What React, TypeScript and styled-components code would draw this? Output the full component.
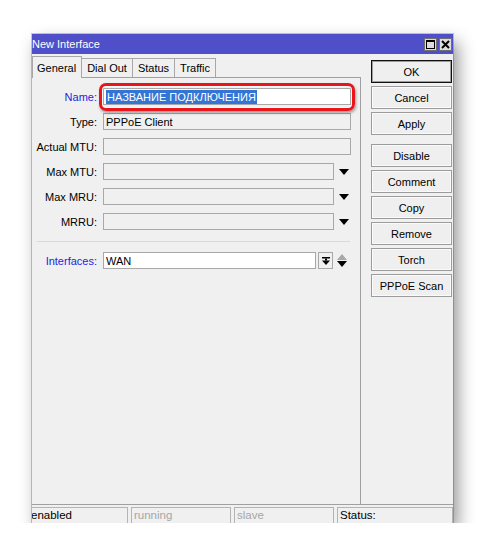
import React from "react"
import styled, { createGlobalStyle } from "styled-components"

const GlobalStyle = createGlobalStyle`
  html, body {
    margin: 0;
    padding: 0;
    background: #ffffff;
  }
  body {
    font-family: "Liberation Sans", Arial, sans-serif;
    font-size: 11px;
    color: #000;
  }
`

const Window = styled.div`
  margin: 34px 0 0 32px;
  width: 421px;
  height: 489px;
  background: #f0f0f0;
  display: flex;
  flex-direction: column;
  box-shadow: 0 0 0 1px rgba(0, 0, 0, 0.2), 5px 8px 16px rgba(0, 0, 0, 0.42);
`

const TitleBar = styled.div`
  height: 20px;
  background: #4f4fc9;
  color: #fff;
  display: flex;
  align-items: center;
  padding: 0 1px 0 0;
  font-size: 11px;
`

const Title = styled.div`
  flex: 1;
`

const TitleButton = styled.div`
  width: 13px;
  height: 13px;
  margin-left: 2px;
  background: #dcdcdc;
  border: 1px solid #707070;
  display: flex;
  align-items: center;
  justify-content: center;
  box-sizing: border-box;
`

const Body = styled.div`
  flex: 1;
  display: flex;
`

const LeftPane = styled.div`
  width: 329px;
  display: flex;
  flex-direction: column;
`

const Tabs = styled.div`
  display: flex;
  align-items: flex-end;
  height: 23px;
  box-sizing: border-box;
`

const Tab = styled.div<{ $active?: boolean }>`
  height: ${p => (p.$active ? 22 : 19)}px;
  padding: 0 ${p => (p.$active ? 4 : 5)}px 0 ${p => (p.$active ? 4 : 5)}px;
  margin-left: -1px;
  border: 1px solid #a8a8a8;
  border-bottom: none;
  background: #f0f0f0;
  display: flex;
  align-items: center;
  box-sizing: border-box;
  font-size: 11px;
  position: relative;
  top: ${p => (p.$active ? 1 : 0)}px;
  z-index: ${p => (p.$active ? 1 : 0)};

  &:first-child {
    margin-left: 0;
    padding-right: 5px;
  }
`

const Panel = styled.div`
  flex: 1;
  border-top: 1px solid #a0a0a0;
  border-right: 1px solid #a0a0a0;
  padding: 10px 0 0 3px;
  display: flex;
  flex-direction: column;
  gap: 8px;
`

const Row = styled.div`
  display: flex;
  align-items: center;
  height: 17px;
`

const Label = styled.div<{ $blue?: boolean }>`
  width: 62px;
  margin-right: 6px;
  text-align: right;
  color: ${p => (p.$blue ? "#2323e6" : "#000")};
  white-space: nowrap;
`

const Field = styled.div<{ $white?: boolean; $width: number }>`
  width: ${p => p.$width}px;
  height: 17px;
  box-sizing: border-box;
  border: 1px solid #a8a8a8;
  background: ${p => (p.$white ? "#fff" : "#f0f0f0")};
  display: flex;
  align-items: center;
  padding-left: 2px;
  white-space: nowrap;
  overflow: hidden;
`

const Highlighted = styled.span`
  background: #3275d6;
  color: #fff;
  padding: 1px 1px;
`

const Annotated = styled.div`
  position: relative;
`

const RedRing = styled.div`
  position: absolute;
  left: -4px;
  right: -4px;
  top: -5px;
  bottom: -6px;
  border: 3px solid #e8151b;
  border-radius: 7px;
  box-shadow: 1px 2px 3px rgba(0, 0, 0, 0.35), inset 0 0 0 1px rgba(255, 255, 255, 0.7);
  pointer-events: none;
`

const Arrow = styled.div`
  width: 19px;
  display: flex;
  justify-content: center;
  align-items: center;
`

const Separator = styled.div`
  height: 1px;
  background: #d9d9d9;
  margin: 3px 10px 2px 2px;
`

const SmallBox = styled.div`
  width: 15px;
  height: 17px;
  margin-left: 2px;
  box-sizing: border-box;
  border: 1px solid #a8a8a8;
  display: flex;
  align-items: center;
  justify-content: center;
`

const UpDown = styled.div`
  width: 17px;
  display: flex;
  flex-direction: column;
  align-items: center;
  gap: 1px;
`

const RightPane = styled.div`
  flex: 1;
  padding: 6px 0 0 10px;
  display: flex;
  flex-direction: column;
  gap: 3px;
`

const Button = styled.div<{ $default?: boolean; $spaced?: boolean }>`
  width: 81px;
  height: 23px;
  box-sizing: border-box;
  border: 1px solid ${p => (p.$default ? "#111" : "#9c9c9c")};
  box-shadow: inset 0 0 0 1px ${p => (p.$default ? "#9c9c9c" : "#fafafa")};
  background: #efefef;
  display: flex;
  align-items: center;
  justify-content: center;
  font-size: 11px;
  margin-top: ${p => (p.$spaced ? 6 : 0)}px;
`

const StatusBar = styled.div`
  height: 19px;
  border-top: 1px solid #a0a0a0;
  box-sizing: border-box;
  display: flex;
  gap: 3px;
  padding-top: 2px;
  overflow: hidden;
`

const Cell = styled.div<{ $width?: number; $muted?: boolean }>`
  ${p => (p.$width ? `width: ${p.$width}px;` : "flex: 1;")}
  box-sizing: border-box;
  border: 1px solid #b4b4b4;
  border-bottom: none;
  padding-left: 2px;
  color: ${p => (p.$muted ? "#a6a6a6" : "#000")};
  font-size: 11.5px;
  line-height: 15px;
`

const EdgeCell = styled(Cell)`
  border-left: none;
  padding-left: 0;
  text-indent: -1px;
`

const DownTri = ({ color = "#000" }: { color?: string }) => (
  <svg width="10" height="6" viewBox="0 0 10 6">
    <path d="M0 0 H10 L5 6 Z" fill={color} />
  </svg>
)

const UpTri = ({ color = "#000" }: { color?: string }) => (
  <svg width="10" height="6" viewBox="0 0 10 6">
    <path d="M0 6 H10 L5 0 Z" fill={color} />
  </svg>
)

const BarDown = () => (
  <svg width="8" height="8" viewBox="0 0 8 8">
    <rect x="0" y="0" width="8" height="1.5" fill="#000" />
    <rect x="3" y="1.5" width="2" height="2" fill="#000" />
    <path d="M0 3.5 H8 L4 8 Z" fill="#000" />
  </svg>
)

function App() {
  return (
    <>
      <GlobalStyle />
      <Window>
        <TitleBar>
          <Title>New Interface</Title>
          <TitleButton>
            <svg width="9" height="9" viewBox="0 0 9 9">
              <rect x="0.5" y="0.5" width="8" height="8" fill="none" stroke="#000" />
              <rect x="0" y="0" width="9" height="2" fill="#000" />
            </svg>
          </TitleButton>
          <TitleButton>
            <svg width="9" height="9" viewBox="0 0 9 9">
              <path d="M1 1 L8 8 M8 1 L1 8" stroke="#000" strokeWidth="2" />
            </svg>
          </TitleButton>
        </TitleBar>
        <Body>
          <LeftPane>
            <Tabs>
              <Tab $active>General</Tab>
              <Tab>Dial Out</Tab>
              <Tab>Status</Tab>
              <Tab>Traffic</Tab>
            </Tabs>
            <Panel>
              <Row>
                <Label $blue>Name:</Label>
                <Annotated>
                  <Field $white $width={248}>
                    <Highlighted>НАЗВАНИЕ ПОДКЛЮЧЕНИЯ</Highlighted>
                  </Field>
                  <RedRing />
                </Annotated>
              </Row>
              <Row>
                <Label>Type:</Label>
                <Field $width={248}>PPPoE Client</Field>
              </Row>
              <Row>
                <Label>Actual MTU:</Label>
                <Field $width={248} />
              </Row>
              <Row>
                <Label>Max MTU:</Label>
                <Field $width={231} />
                <Arrow><DownTri /></Arrow>
              </Row>
              <Row>
                <Label>Max MRU:</Label>
                <Field $width={231} />
                <Arrow><DownTri /></Arrow>
              </Row>
              <Row>
                <Label>MRRU:</Label>
                <Field $width={231} />
                <Arrow><DownTri /></Arrow>
              </Row>
              <Separator />
              <Row>
                <Label $blue>Interfaces:</Label>
                <Field $white $width={213}>WAN</Field>
                <SmallBox><BarDown /></SmallBox>
                <UpDown>
                  <UpTri color="#a8a8a8" />
                  <DownTri />
                </UpDown>
              </Row>
            </Panel>
          </LeftPane>
          <RightPane>
            <Button $default>OK</Button>
            <Button>Cancel</Button>
            <Button>Apply</Button>
            <Button $spaced>Disable</Button>
            <Button>Comment</Button>
            <Button>Copy</Button>
            <Button>Remove</Button>
            <Button>Torch</Button>
            <Button>PPPoE Scan</Button>
          </RightPane>
        </Body>
        <StatusBar>
          <EdgeCell $width={96}>enabled</EdgeCell>
          <Cell $width={100} $muted>running</Cell>
          <Cell $width={100} $muted>slave</Cell>
          <Cell>Status:</Cell>
        </StatusBar>
      </Window>
    </>
  )
}

export default App
